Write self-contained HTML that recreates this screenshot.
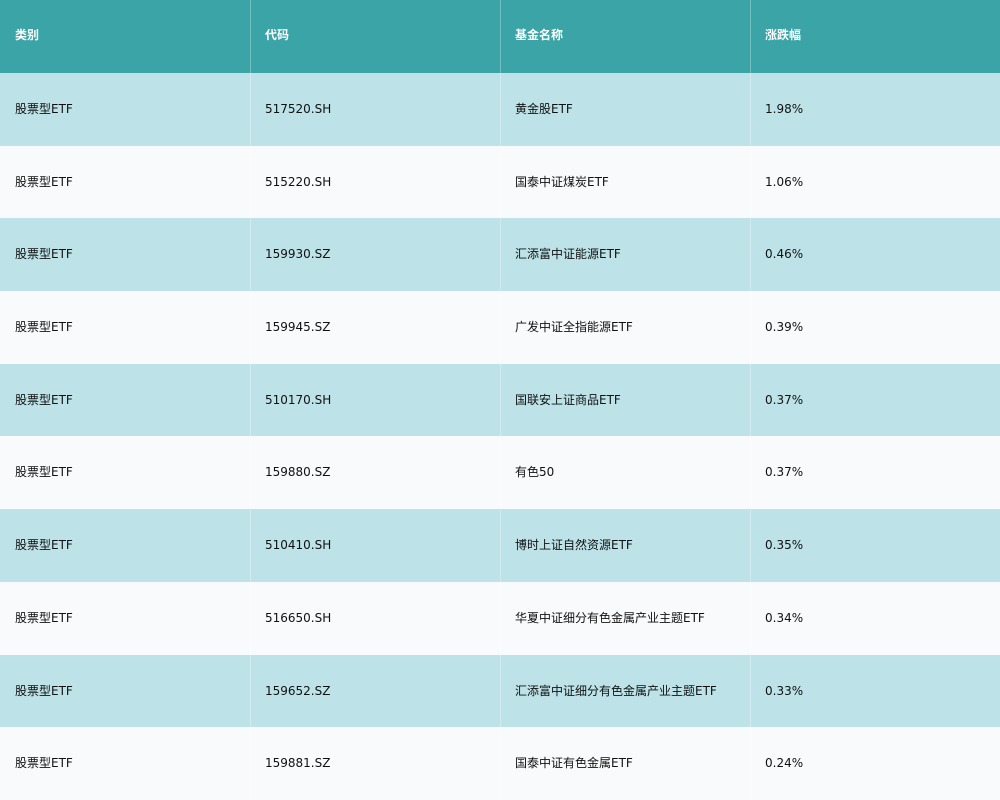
<!DOCTYPE html>
<html><head><meta charset="utf-8"><style>
body{margin:0;width:1000px;height:800px;overflow:hidden;font-family:"DejaVu Sans","Noto Sans CJK SC",sans-serif;font-size:12px;color:#111;position:relative;}
.r{position:absolute;left:0;width:1000px;height:73px;}
.c{position:absolute;top:0;height:100%;width:250px;box-sizing:border-box;}
.c span{position:absolute;left:15px;top:29px;line-height:14px;height:14px;white-space:nowrap;}
.c+.c{border-left:1px solid rgba(255,255,255,0.3);}
.c+.c span{left:14px;}
.h{background:#3aa4a7;color:#fff;font-weight:bold;}
.h .c span{top:28px;}
.a{background:#bde3e9;}
.b{background:#f8fafc;}
</style></head><body>
<div class="r h" style="top:0"><div class="c" style="left:0"><span>类别</span></div><div class="c" style="left:250px"><span>代码</span></div><div class="c" style="left:500px"><span>基金名称</span></div><div class="c" style="left:750px"><span>涨跌幅</span></div></div>
<div class="r a" style="top:72.7px"><div class="c" style="left:0"><span>股票型ETF</span></div><div class="c" style="left:250px"><span>517520.SH</span></div><div class="c" style="left:500px"><span>黄金股ETF</span></div><div class="c" style="left:750px"><span>1.98%</span></div></div>
<div class="r b" style="top:145.5px"><div class="c" style="left:0"><span>股票型ETF</span></div><div class="c" style="left:250px"><span>515220.SH</span></div><div class="c" style="left:500px"><span>国泰中证煤炭ETF</span></div><div class="c" style="left:750px"><span>1.06%</span></div></div>
<div class="r a" style="top:218.2px"><div class="c" style="left:0"><span>股票型ETF</span></div><div class="c" style="left:250px"><span>159930.SZ</span></div><div class="c" style="left:500px"><span>汇添富中证能源ETF</span></div><div class="c" style="left:750px"><span>0.46%</span></div></div>
<div class="r b" style="top:290.9px"><div class="c" style="left:0"><span>股票型ETF</span></div><div class="c" style="left:250px"><span>159945.SZ</span></div><div class="c" style="left:500px"><span>广发中证全指能源ETF</span></div><div class="c" style="left:750px"><span>0.39%</span></div></div>
<div class="r a" style="top:363.6px"><div class="c" style="left:0"><span>股票型ETF</span></div><div class="c" style="left:250px"><span>510170.SH</span></div><div class="c" style="left:500px"><span>国联安上证商品ETF</span></div><div class="c" style="left:750px"><span>0.37%</span></div></div>
<div class="r b" style="top:436.4px"><div class="c" style="left:0"><span>股票型ETF</span></div><div class="c" style="left:250px"><span>159880.SZ</span></div><div class="c" style="left:500px"><span>有色50</span></div><div class="c" style="left:750px"><span>0.37%</span></div></div>
<div class="r a" style="top:509.1px"><div class="c" style="left:0"><span>股票型ETF</span></div><div class="c" style="left:250px"><span>510410.SH</span></div><div class="c" style="left:500px"><span>博时上证自然资源ETF</span></div><div class="c" style="left:750px"><span>0.35%</span></div></div>
<div class="r b" style="top:581.8px"><div class="c" style="left:0"><span>股票型ETF</span></div><div class="c" style="left:250px"><span>516650.SH</span></div><div class="c" style="left:500px"><span>华夏中证细分有色金属产业主题ETF</span></div><div class="c" style="left:750px"><span>0.34%</span></div></div>
<div class="r a" style="top:654.5px"><div class="c" style="left:0"><span>股票型ETF</span></div><div class="c" style="left:250px"><span>159652.SZ</span></div><div class="c" style="left:500px"><span>汇添富中证细分有色金属产业主题ETF</span></div><div class="c" style="left:750px"><span>0.33%</span></div></div>
<div class="r b" style="top:727.3px"><div class="c" style="left:0"><span>股票型ETF</span></div><div class="c" style="left:250px"><span>159881.SZ</span></div><div class="c" style="left:500px"><span>国泰中证有色金属ETF</span></div><div class="c" style="left:750px"><span>0.24%</span></div></div>
</body></html>
